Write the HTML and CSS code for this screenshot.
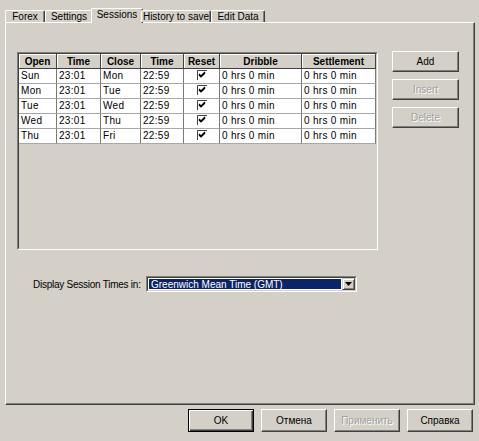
FILE: index.html
```html
<!DOCTYPE html>
<html>
<head>
<meta charset="utf-8">
<link rel="stylesheet" href="styles.css">
</head>
<body>
<div class="window">
  <div class="tabs">
    <div class="tab t-forex">Forex</div>
    <div class="tab t-settings">Settings</div>
    <div class="tab sel t-sessions">Sessions</div>
    <div class="tab t-history">History to save</div>
    <div class="tab t-edit">Edit Data</div>
  </div>
  <div class="panel">
    <div class="top">
      <div class="grid">
        <div class="grid-in">
          <table>
            <colgroup>
              <col class="c1"><col class="c2"><col class="c3"><col class="c4"><col class="c5"><col class="c6"><col class="c7">
            </colgroup>
            <thead>
              <tr><th>Open</th><th>Time</th><th>Close</th><th>Time</th><th>Reset</th><th>Dribble</th><th>Settlement</th></tr>
            </thead>
            <tbody>
              <tr><td>Sun</td><td>23:01</td><td>Mon</td><td>22:59</td><td class="chk"><svg width="10" height="10" viewBox="0 0 10 10"><path d="M0.5 10V0.5H10" fill="none" stroke="#404040"/><path d="M2 4l2 2 4-4M2 5l2 2 4-4" fill="none" stroke="#000" stroke-width="1.2"/></svg></td><td>0 hrs 0 min</td><td>0 hrs 0 min</td></tr>
              <tr><td>Mon</td><td>23:01</td><td>Tue</td><td>22:59</td><td class="chk"><svg width="10" height="10" viewBox="0 0 10 10"><path d="M0.5 10V0.5H10" fill="none" stroke="#404040"/><path d="M2 4l2 2 4-4M2 5l2 2 4-4" fill="none" stroke="#000" stroke-width="1.2"/></svg></td><td>0 hrs 0 min</td><td>0 hrs 0 min</td></tr>
              <tr><td>Tue</td><td>23:01</td><td>Wed</td><td>22:59</td><td class="chk"><svg width="10" height="10" viewBox="0 0 10 10"><path d="M0.5 10V0.5H10" fill="none" stroke="#404040"/><path d="M2 4l2 2 4-4M2 5l2 2 4-4" fill="none" stroke="#000" stroke-width="1.2"/></svg></td><td>0 hrs 0 min</td><td>0 hrs 0 min</td></tr>
              <tr><td>Wed</td><td>23:01</td><td>Thu</td><td>22:59</td><td class="chk"><svg width="10" height="10" viewBox="0 0 10 10"><path d="M0.5 10V0.5H10" fill="none" stroke="#404040"/><path d="M2 4l2 2 4-4M2 5l2 2 4-4" fill="none" stroke="#000" stroke-width="1.2"/></svg></td><td>0 hrs 0 min</td><td>0 hrs 0 min</td></tr>
              <tr><td>Thu</td><td>23:01</td><td>Fri</td><td>22:59</td><td class="chk"><svg width="10" height="10" viewBox="0 0 10 10"><path d="M0.5 10V0.5H10" fill="none" stroke="#404040"/><path d="M2 4l2 2 4-4M2 5l2 2 4-4" fill="none" stroke="#000" stroke-width="1.2"/></svg></td><td>0 hrs 0 min</td><td>0 hrs 0 min</td></tr>
            </tbody>
          </table>
        </div>
      </div>
      <div class="side">
        <div class="btn">Add</div>
        <div class="btn dis">Insert</div>
        <div class="btn dis">Delete</div>
      </div>
    </div>
    <div class="tz">
      <span class="tz-label">Display Session Times in:</span>
      <div class="select">
        <div class="select-in">
          <span class="val">Greenwich Mean Time (GMT)</span>
          <span class="arrow"><svg width="7" height="4" viewBox="0 0 7 4"><path d="M0 0h7L3.5 4z" fill="#000"/></svg></span>
        </div>
      </div>
    </div>
  </div>
  <div class="footer">
    <div class="btn def">OK</div>
    <div class="btn">Отмена</div>
    <div class="btn dis">Применить</div>
    <div class="btn">Справка</div>
  </div>
</div>
</body>
</html>
```

FILE: styles.css
```css
* { box-sizing: border-box; }
html, body { margin: 0; padding: 0; }
body {
  background: #d4d0c8;
  font-family: "Liberation Sans", Arial, sans-serif;
  font-size: 10px;
  color: #000;
}
.window {
  width: 479px;
  height: 441px;
  padding-top: 8px;
}
.tabs {
  display: flex;
  align-items: flex-end;
  height: 14px;
  padding-left: 5px;
  position: relative;
  z-index: 1;
}
.tab {
  height: 12px;
  line-height: 11px;
  text-align: center;
  background: #d4d0c8;
  border-top: 1px solid #fff;
  border-left: 1px solid #fff;
  border-right: 1px solid #404040;
  box-shadow: inset -1px 0 #808080;
  border-radius: 2px 2px 0 0;
  white-space: nowrap;
}
.t-forex { width: 40px; }
.t-settings { width: 48px; }
.t-sessions { width: 52px; }
.t-history { width: 70px; }
.t-edit { width: 54px; }
.tab.sel {
  height: 15px;
  margin: 0 -2px -1px -2px;
  line-height: 12px;
}
.panel {
  margin-left: 5px;
  width: 470px;
  height: 383px;
  border: 1px solid;
  border-color: #fff #404040 #404040 #fff;
  box-shadow: inset -1px -1px #808080;
  padding: 29px 0 0 11px;
}
.top {
  display: flex;
  align-items: flex-start;
}
.grid {
  width: 361px;
  height: 198px;
  border: 1px solid;
  border-color: #808080 #fff #fff #808080;
}
.grid-in {
  width: 100%;
  height: 100%;
  border: 1px solid;
  border-color: #404040 #d4d0c8 #d4d0c8 #404040;
  background: #d4d0c8;
  overflow: hidden;
}
table {
  border-collapse: separate;
  border-spacing: 0;
  table-layout: fixed;
  width: 357px;
}
.c1 { width: 38px; }
.c2 { width: 44px; }
.c3 { width: 40px; }
.c4 { width: 43px; }
.c5 { width: 36px; }
.c6 { width: 82px; }
.c7 { width: 74px; }
th {
  height: 15px;
  padding: 0;
  font-weight: bold;
  text-align: center;
  line-height: 13px;
  background: #d4d0c8;
  border-right: 1px solid #404040;
  border-bottom: 1px solid #404040;
  box-shadow: inset 1px 1px #fff;
  white-space: nowrap;
  overflow: hidden;
}
td {
  height: 15px;
  padding: 0 0 0 2px;
  line-height: 14px;
  letter-spacing: 0.3px;
  background: #fff;
  border-right: 1px solid #7a7a7a;
  border-bottom: 1px solid #a8a8a8;
  white-space: nowrap;
  overflow: hidden;
}
td.chk {
  text-align: center;
  padding: 0;
}
td.chk svg { display: inline-block; vertical-align: -1px; }
.side {
  display: flex;
  flex-direction: column;
  gap: 7px;
  margin-left: 14px;
  margin-top: -1px;
}
.btn {
  width: 67px;
  height: 21px;
  line-height: 19px;
  text-align: center;
  background: #d4d0c8;
  border: 1px solid;
  border-color: #fff #404040 #404040 #fff;
  box-shadow: inset -1px -1px #808080;
  white-space: nowrap;
}
.btn.dis {
  color: #a0a0a0;
  text-shadow: 1px 1px #fff;
}
.btn.def {
  border-color: #000;
  box-shadow: inset 1px 1px #fff, inset -1px -1px #404040, inset -2px -2px #808080;
}
.tz {
  display: flex;
  align-items: center;
  margin-top: 26px;
  padding-left: 16px;
}
.tz-label {
  width: 113px;
  white-space: nowrap;
  letter-spacing: -0.25px;
}
.select {
  width: 211px;
  height: 16px;
  border: 1px solid;
  border-color: #808080 #fff #fff #808080;
}
.select-in {
  display: flex;
  height: 100%;
  border: 1px solid;
  border-color: #404040 #d4d0c8 #d4d0c8 #404040;
  background: #fff;
}
.val {
  flex: 1;
  background: #0a246a;
  color: #fff;
  line-height: 12px;
  padding-left: 2px;
  margin: 1px;
  white-space: nowrap;
}
.arrow {
  width: 13px;
  display: flex;
  align-items: center;
  justify-content: center;
  background: #d4d0c8;
  border: 1px solid;
  border-color: #d4d0c8 #404040 #404040 #d4d0c8;
  box-shadow: inset 1px 1px #fff, inset -1px -1px #808080;
}
.footer {
  display: flex;
  gap: 7px;
  margin-top: 4px;
  padding-left: 188px;
}
.footer .btn {
  width: 66px;
  height: 23px;
  line-height: 21px;
}
```
